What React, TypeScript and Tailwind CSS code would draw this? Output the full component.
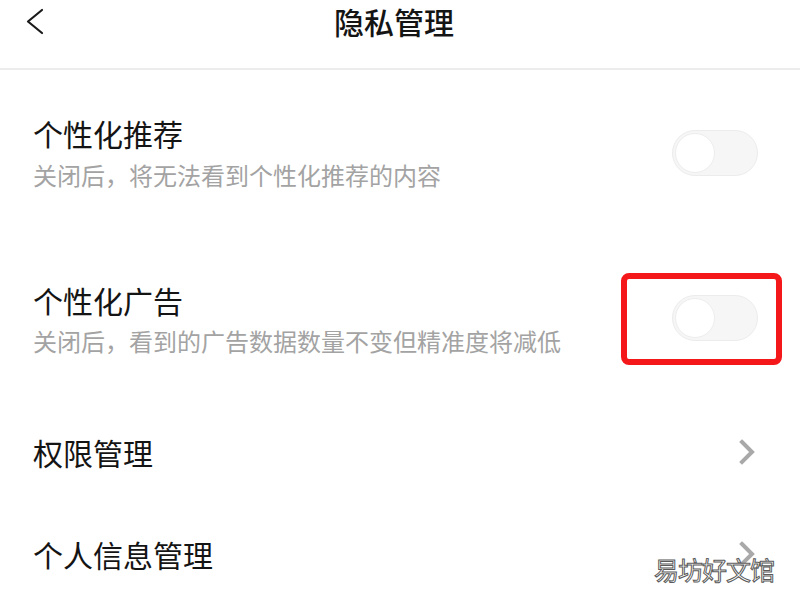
import React from "react";

const font = "font-['Noto_Sans_CJK_SC','Noto_Sans',sans-serif]";

function Toggle() {
  return (
    <div className="w-[86px] h-[46px] rounded-full bg-[#f6f6f6] border border-[#ececec] flex items-center pl-[2px]">
      <div className="w-[40px] h-[40px] rounded-full bg-white border border-[#ededed]" />
    </div>
  );
}

function Chevron() {
  return (
    <svg width="20" height="26" viewBox="0 0 20 26" className="shrink-0">
      <polyline
        points="4,3 14,13 4,23"
        fill="none"
        stroke="#a9a9a9"
        strokeWidth="4"
        strokeLinecap="square"
        strokeLinejoin="miter"
      />
    </svg>
  );
}

export default function App() {
  return (
    <div className={`relative w-[800px] h-[600px] overflow-hidden bg-white text-[#141414] ${font}`}>
      <header className="h-[70px] border-b-2 border-[#ececec] grid grid-cols-[1fr_auto_1fr] items-start">
        <div className="pl-[26px] pt-[8px]">
          <svg width="20" height="28" viewBox="0 0 20 28">
            <polyline
              points="16,2 2,13.5 16,25"
              fill="none"
              stroke="#1a1a1a"
              strokeWidth="2.2"
              strokeLinecap="round"
              strokeLinejoin="round"
            />
          </svg>
        </div>
        <h1 className="text-[30px] leading-[42px] font-medium mr-[12px]">隐私管理</h1>
        <div />
      </header>

      <main className="px-[33px] pr-[42px]">
        <section className="mt-[43px] flex items-center justify-between">
          <div>
            <h2 className="text-[30px] leading-[40px]">个性化推荐</h2>
            <p className="mt-[5px] text-[24px] leading-[34px] text-[#a3a3a3]">关闭后，将无法看到个性化推荐的内容</p>
          </div>
          <Toggle />
        </section>

        <section className="mt-[87px] flex items-center justify-between">
          <div>
            <h2 className="text-[30px] leading-[40px]">个性化广告</h2>
            <p className="mt-[4px] text-[24px] leading-[34px] text-[#a3a3a3]">关闭后，看到的广告数据数量不变但精准度将减低</p>
          </div>
          <div className="-my-[6px] -mr-[24px] border-[6px] border-[#f5181b] rounded-[8px] pl-[45px] pr-[18px] pt-[16px] pb-[18px]">
            <Toggle />
          </div>
        </section>

        <section className="mt-[73px] flex items-center justify-between">
          <h2 className="text-[30px] leading-[40px]">权限管理</h2>
          <Chevron />
        </section>

        <section className="mt-[62px] flex items-center justify-between">
          <h2 className="text-[30px] leading-[40px]">个人信息管理</h2>
          <Chevron />
        </section>
      </main>

      <div className="absolute right-[26px] bottom-[16px] text-[25px] leading-[30px] text-white [-webkit-text-stroke:1px_#5a5a5a] tracking-[-1px]">
        易坊好文馆
      </div>
    </div>
  );
}
